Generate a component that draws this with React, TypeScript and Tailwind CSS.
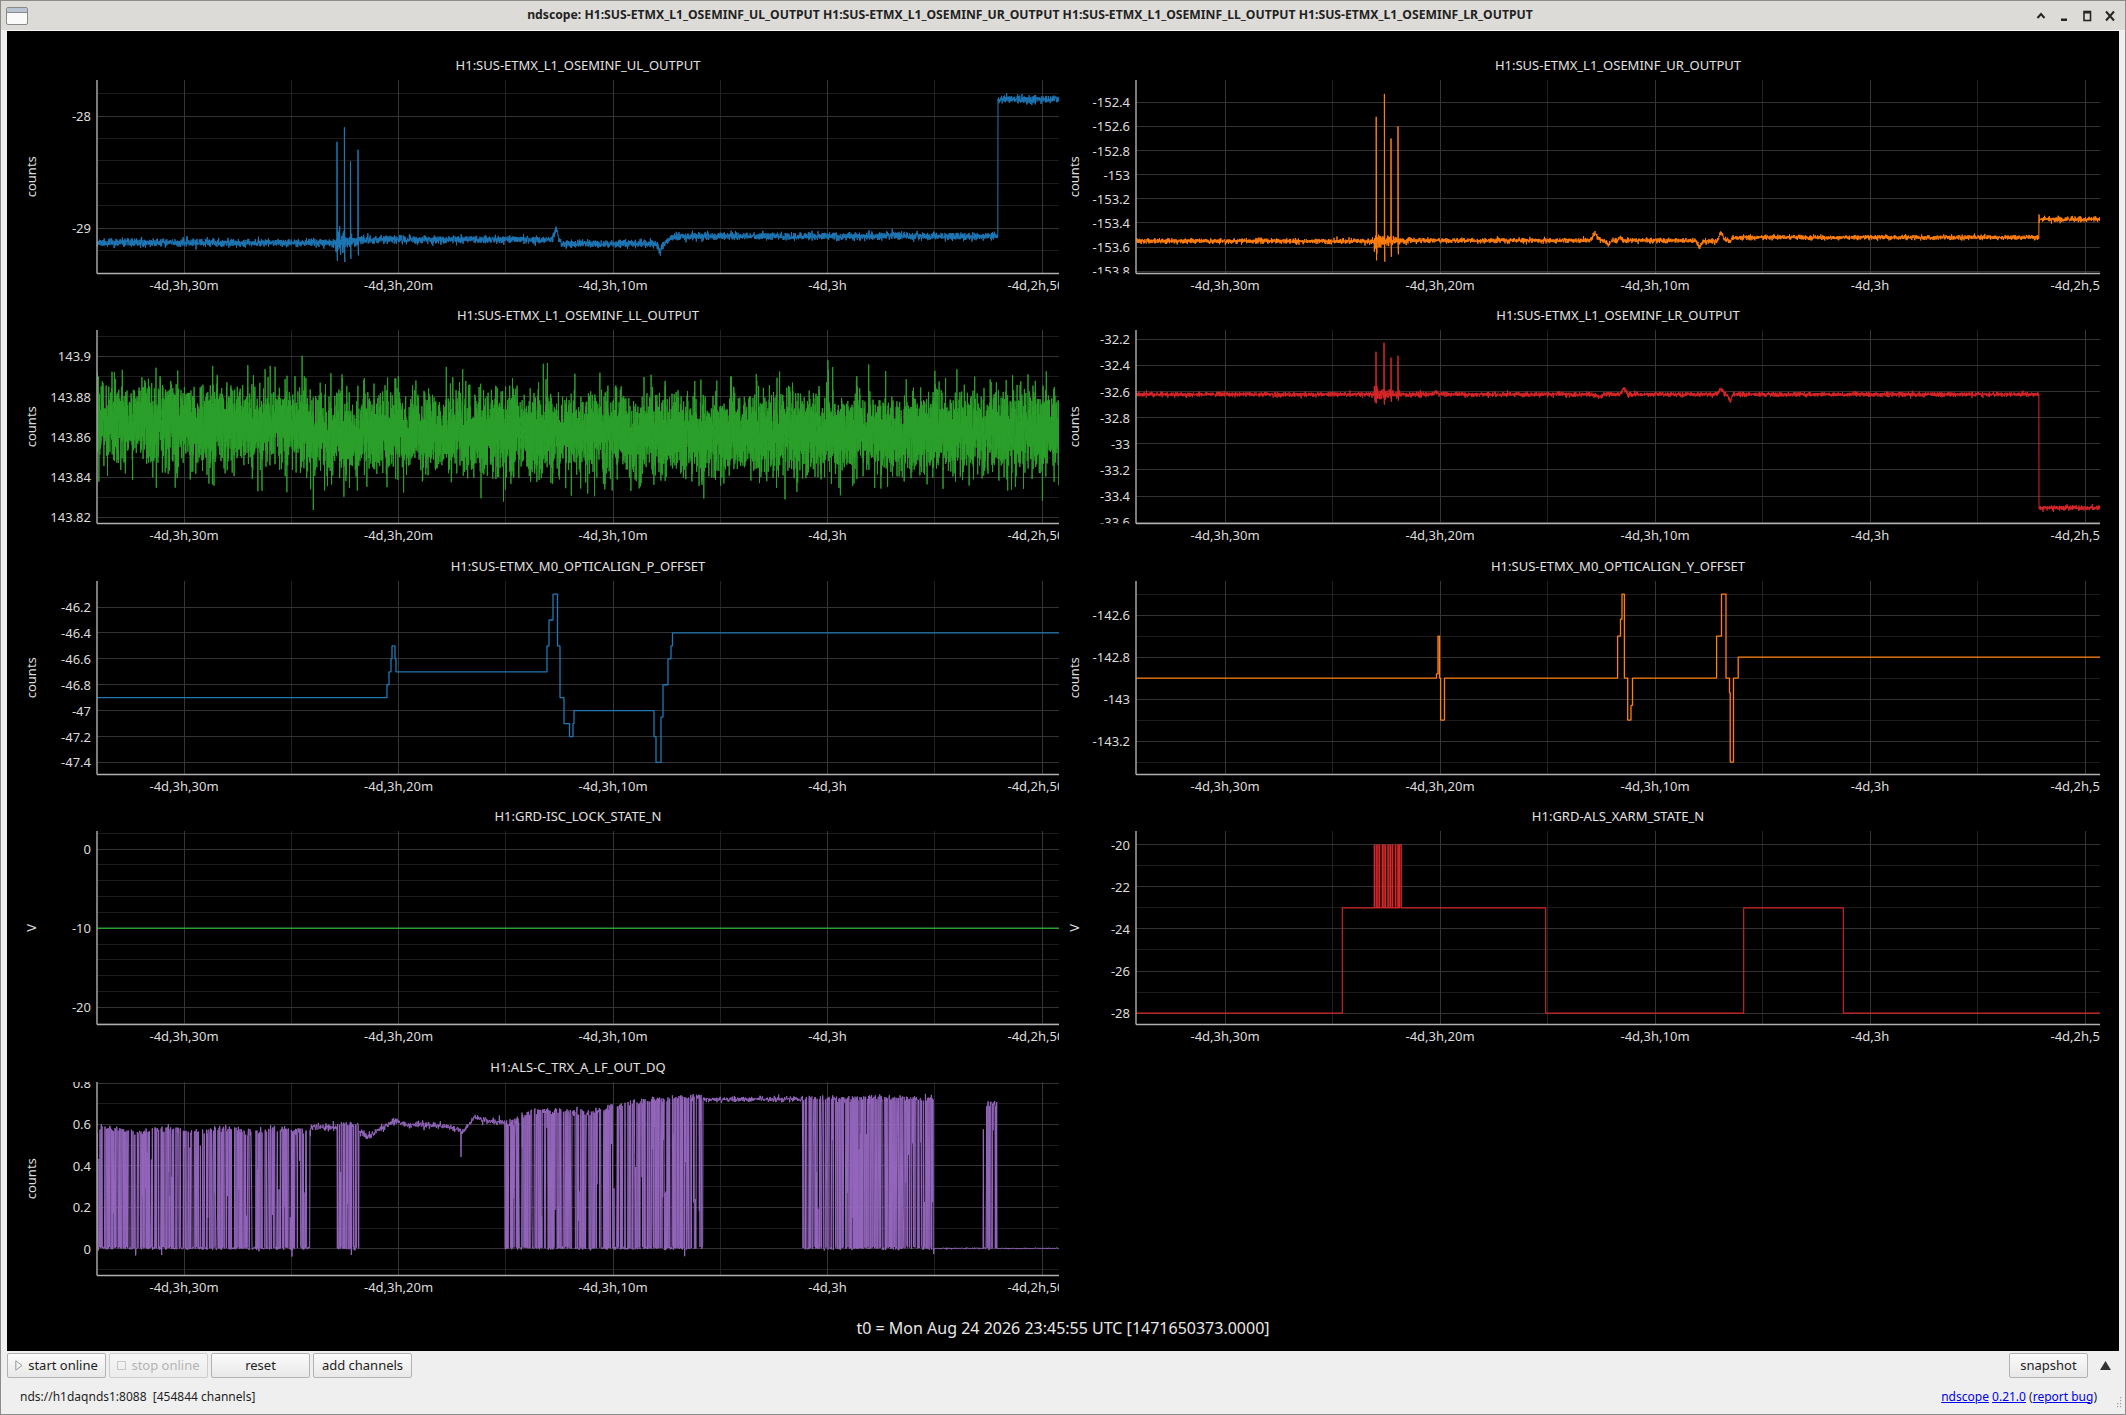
import React from "react";

type Pt = [number, number];

interface Col {
  W: number;
  gutter: number;
  unitX: number;
  t0: number;
  dt: number;
  titleCls: string;
}

interface Cfg {
  id: string;
  title: string;
  unit: string;
  color: string;
  yTop: number;
  yBot: number;
  major: [number, string][];
  minor: number[];
  data: Pt[];
  sw: number;
}

const LEFT: Col = { W: 962, gutter: 90, unitX: 24, t0: 87, dt: 107.25, titleCls: "ml-[90px] w-[962px]" };
const RIGHT: Col = { W: 964, gutter: 77, unitX: 15, t0: 89, dt: 107.5, titleCls: "ml-[77px] w-[964px]" };

const X_LABELS = ["-4d,3h,30m", "-4d,3h,20m", "-4d,3h,10m", "-4d,3h", "-4d,2h,50m"];

// small seeded generator so the traces are the same on every load
const rng = (seed: number) => {
  let a = seed >>> 0;
  return () => {
    a = (a + 0x6d2b79f5) >>> 0;
    let t = a;
    t = Math.imul(t ^ (t >>> 15), t | 1);
    t ^= t + Math.imul(t ^ (t >>> 7), t | 61);
    return ((t ^ (t >>> 14)) >>> 0) / 4294967296;
  };
};

const gauss = (r: () => number) => {
  const u = Math.max(r(), 1e-9);
  return Math.sqrt(-2 * Math.log(u)) * Math.cos(2 * Math.PI * r());
};

const g = (x: number, c: number, w: number) => Math.exp(-(((x - c) / w) ** 2));

const sstep = (a: number, b: number, x: number) => {
  const t = Math.min(1, Math.max(0, (x - a) / (b - a)));
  return t * t * (3 - 2 * t);
};

const interp = (pts: [number, number][], x: number) => {
  if (x <= pts[0][0]) return pts[0][1];
  for (let i = 1; i < pts.length; i++) {
    if (x <= pts[i][0]) {
      const [x0, y0] = pts[i - 1];
      const [x1, y1] = pts[i];
      return y0 + ((y1 - y0) * (x - x0)) / (x1 - x0);
    }
  }
  return pts[pts.length - 1][1];
};

function noiseTrace(
  seed: number,
  W: number,
  per: number,
  base: (x: number) => number,
  sigma: (x: number) => number,
  spikes: [number, number, number][],
): Pt[] {
  const r = rng(seed);
  const pts: Pt[] = [];
  let si = 0;
  const n = Math.round(W * per);
  for (let i = 0; i <= n; i++) {
    const x = i / per;
    while (si < spikes.length && spikes[si][0] <= x) {
      const [sx, up, down] = spikes[si];
      pts.push([sx, up], [sx + 0.4, down]);
      si++;
    }
    pts.push([x, base(x) + gauss(r) * sigma(x)]);
  }
  return pts;
}

function steps(list: [number, number][], W: number): Pt[] {
  const pts: Pt[] = [];
  list.forEach(([x, v], i) => {
    if (i > 0) pts.push([x, list[i - 1][1]]);
    pts.push([x, v]);
  });
  pts.push([W, list[list.length - 1][1]]);
  return pts;
}

const UL = noiseTrace(
  11,
  962,
  6,
  (x) => {
    if (x < 240) return -29.128;
    if (x < 283) return -29.115 + ((x - 240) / 43) * 0.015;
    if (x < 470) return -29.1 - 0.037 * sstep(459, 467, x) + 0.09 * g(x, 459, 2.5);
    if (x < 558) return -29.137;
    if (x < 600) return -29.137 + 0.067 * sstep(564, 580, x) - 0.075 * g(x, 563, 2.2);
    if (x < 901) return -29.07;
    return -27.85;
  },
  (x) => (x > 238 && x < 272 ? 0.05 * Math.exp(-(x - 238) / 12) + 0.017 : 0.017),
  [
    [240, -28.23, -29.29],
    [247.4, -28.1, -29.3],
    [253.5, -28.4, -29.27],
    [261, -28.3, -29.24],
  ],
);

const UR = noiseTrace(
  12,
  964,
  6,
  (x) => {
    if (x < 240) return -153.55;
    if (x < 270) return -153.545;
    if (x < 555) return -153.545 + 0.06 * g(x, 459, 3) - 0.03 * g(x, 472, 3) + 0.025 * g(x, 484, 2);
    if (x < 903)
      return -153.55 + 0.03 * sstep(586, 598, x) - 0.05 * g(x, 564, 2.5) + 0.07 * g(x, 585, 2.5) - 0.03 * g(x, 594, 1.5);
    return -153.37;
  },
  (x) => (x > 238 && x < 275 ? 0.035 * Math.exp(-(x - 238) / 12) + 0.01 : 0.01),
  [
    [240.2, -152.52, -153.71],
    [248.4, -152.33, -153.72],
    [255, -152.7, -153.68],
    [262, -152.6, -153.66],
    [903, -153.33, -153.37],
  ],
);

const LL = noiseTrace(13, 962, 10, (x) => (x < 208 ? 143.866 : 143.862), () => 0.0102, []);

const LR = noiseTrace(
  14,
  964,
  6,
  (x) => {
    if (x < 903)
      return (
        -32.622 +
        0.015 * g(x, 300, 2) -
        0.02 * g(x, 462, 4) +
        0.05 * g(x, 488, 2.5) +
        0.04 * g(x, 585, 2.5) -
        0.05 * g(x, 594, 2)
      );
    return -33.49;
  },
  (x) => (x > 238 && x < 275 ? 0.025 * Math.exp(-(x - 238) / 12) + 0.009 : 0.009),
  [
    [240, -32.295, -32.69],
    [248, -32.226, -32.7],
    [255, -32.34, -32.68],
    [262, -32.326, -32.67],
  ],
);

const P_OFF = steps(
  [
    [0, -46.9], [290, -46.8], [292, -46.7], [294, -46.6], [295, -46.5], [298, -46.6], [299, -46.7],
    [450, -46.5], [452, -46.3], [456, -46.1], [460.5, -46.5], [463, -46.9], [467, -47.1], [472.5, -47.2],
    [476, -47.1], [477, -47.0], [557, -47.2], [559, -47.4], [564, -47.05], [566, -46.8], [571, -46.6],
    [574, -46.5], [575.5, -46.4],
  ],
  962,
);

const Y_OFF = steps(
  [
    [0, -142.9], [300.5, -142.88], [302, -142.7], [303.5, -142.9], [304.6, -143.1], [308.5, -142.9],
    [481.6, -142.7], [484.5, -142.62], [486, -142.5], [488.4, -142.9], [491.7, -143.1], [495, -143.03],
    [496.5, -142.9], [580.6, -142.7], [585.5, -142.5], [590, -142.9], [593.5, -142.97], [594.2, -143.3],
    [597.5, -142.9], [602.2, -142.8],
  ],
  964,
);

const XARM = (() => {
  const r = rng(21);
  const list: [number, number][] = [[0, -28], [206.3, -23]];
  let x = 238.2;
  let hi = true;
  while (x < 264.5) {
    list.push([x, hi ? -20 : -23]);
    hi = !hi;
    x += hi ? 0.9 + r() * 1.8 : 0.4 + r() * 0.8;
  }
  list.push([265.3, -23], [409.7, -28], [607.7, -23], [707.3, -28]);
  return steps(list, 964);
})();

const ISC = steps([[0, -10]], 962);

const ALS = (() => {
  const r = rng(5);
  const pts: Pt[] = [];
  const per = 3;
  let high = true;
  const envE: [number, number][] = [[408, 0.6], [440, 0.67], [490, 0.655], [530, 0.7], [560, 0.72], [606, 0.735]];
  const smoothD: [number, number][] = [
    [262, 0.56], [270, 0.545], [285, 0.58], [296, 0.615], [310, 0.6], [330, 0.598], [350, 0.59],
    [360, 0.575], [366, 0.562], [372, 0.6], [378, 0.64], [385, 0.62], [395, 0.615], [408, 0.612],
  ];
  const tog = (x: number): number | null => {
    if (x < 213.5) return 0.572 + 0.01 * Math.sin(x / 9);
    if (x >= 240 && x < 262) return 0.6;
    if (x >= 408 && x < 606) return interp(envE, x);
    if (x >= 705 && x < 837) return 0.725;
    if (x >= 886 && x < 900) return 0.7;
    return null;
  };
  for (let i = 1; i <= 962 * per; i++) {
    const x = i / per;
    const env = tog(x);
    let v: number;
    if (env !== null) {
      if (r() < 0.42) high = !high;
      if (high) v = r() < 0.14 ? env * (0.2 + r() * 0.7) : env + gauss(r) * 0.009;
      else v = 0.003 + gauss(r) * 0.004 - (r() < 0.012 ? 0.035 : 0);
    } else if (x < 240) v = 0.585 + gauss(r) * 0.008;
    else if (x < 408) v = interp(smoothD, x) + gauss(r) * 0.008 - (Math.abs(x - 364) < 0.3 ? 0.12 : 0);
    else if (x < 705) v = 0.722 + gauss(r) * 0.007;
    else v = 0.002 + gauss(r) * 0.0015;
    pts.push([x, v]);
  }
  return pts;
})();

const PLOTS: [Cfg, Col][] = [
  [
    {
      id: "ul", title: "H1:SUS-ETMX_L1_OSEMINF_UL_OUTPUT", unit: "counts", color: "#1f77b4",
      yTop: -27.679, yBot: -29.402, major: [[-28, "-28"], [-29, "-29"]],
      minor: [-27.8, -28.2, -28.4, -28.6, -28.8, -29.2, -29.4], data: UL, sw: 1,
    },
    LEFT,
  ],
  [
    {
      id: "ur", title: "H1:SUS-ETMX_L1_OSEMINF_UR_OUTPUT", unit: "counts", color: "#ff7f0e",
      yTop: -152.215, yBot: -153.819,
      major: [[-152.4, "-152.4"], [-152.6, "-152.6"], [-152.8, "-152.8"], [-153, "-153"], [-153.2, "-153.2"], [-153.4, "-153.4"], [-153.6, "-153.6"], [-153.8, "-153.8"]],
      minor: [], data: UR, sw: 1,
    },
    RIGHT,
  ],
  [
    {
      id: "ll", title: "H1:SUS-ETMX_L1_OSEMINF_LL_OUTPUT", unit: "counts", color: "#2ca02c",
      yTop: 143.9131, yBot: 143.817,
      major: [[143.9, "143.9"], [143.88, "143.88"], [143.86, "143.86"], [143.84, "143.84"], [143.82, "143.82"]],
      minor: [143.91, 143.89, 143.87, 143.85, 143.83], data: LL, sw: 1,
    },
    LEFT,
  ],
  [
    {
      id: "lr", title: "H1:SUS-ETMX_L1_OSEMINF_LR_OUTPUT", unit: "counts", color: "#d62728",
      yTop: -32.129, yBot: -33.61,
      major: [[-32.2, "-32.2"], [-32.4, "-32.4"], [-32.6, "-32.6"], [-32.8, "-32.8"], [-33, "-33"], [-33.2, "-33.2"], [-33.4, "-33.4"], [-33.6, "-33.6"]],
      minor: [], data: LR, sw: 1,
    },
    RIGHT,
  ],
  [
    {
      id: "po", title: "H1:SUS-ETMX_M0_OPTICALIGN_P_OFFSET", unit: "counts", color: "#1f77b4",
      yTop: -45.999, yBot: -47.493,
      major: [[-46.2, "-46.2"], [-46.4, "-46.4"], [-46.6, "-46.6"], [-46.8, "-46.8"], [-47, "-47"], [-47.2, "-47.2"], [-47.4, "-47.4"]],
      minor: [], data: P_OFF, sw: 1.3,
    },
    LEFT,
  ],
  [
    {
      id: "yo", title: "H1:SUS-ETMX_M0_OPTICALIGN_Y_OFFSET", unit: "counts", color: "#ff7f0e",
      yTop: -142.438, yBot: -143.359,
      major: [[-142.6, "-142.6"], [-142.8, "-142.8"], [-143, "-143"], [-143.2, "-143.2"]],
      minor: [-142.5, -142.7, -142.9, -143.1, -143.3], data: Y_OFF, sw: 1.3,
    },
    RIGHT,
  ],
  [
    {
      id: "isc", title: "H1:GRD-ISC_LOCK_STATE_N", unit: "V", color: "#2ca02c",
      yTop: 2.28, yBot: -22.15, major: [[0, "0"], [-10, "-10"], [-20, "-20"]],
      minor: [2, -2, -4, -6, -8, -12, -14, -16, -18, -22], data: ISC, sw: 1.3,
    },
    LEFT,
  ],
  [
    {
      id: "xarm", title: "H1:GRD-ALS_XARM_STATE_N", unit: "V", color: "#d62728",
      yTop: -19.35, yBot: -28.54,
      major: [[-20, "-20"], [-22, "-22"], [-24, "-24"], [-26, "-26"], [-28, "-28"]],
      minor: [-21, -23, -25, -27], data: XARM, sw: 1.1,
    },
    RIGHT,
  ],
  [
    {
      id: "als", title: "H1:ALS-C_TRX_A_LF_OUT_DQ", unit: "counts", color: "#9467bd",
      yTop: 0.805, yBot: -0.129,
      major: [[0.8, "0.8"], [0.6, "0.6"], [0.4, "0.4"], [0.2, "0.2"], [0, "0"]],
      minor: [0.7, 0.5, 0.3, 0.1, -0.1], data: ALS, sw: 1,
    },
    LEFT,
  ],
];

const H = 193.5;

function Plot({ cfg, col }: { cfg: Cfg; col: Col }) {
  const { W, gutter } = col;
  const sy = (v: number) => ((cfg.yTop - v) / (cfg.yTop - cfg.yBot)) * H;
  const xt = Array.from({ length: 9 }, (_, k) => col.t0 + k * col.dt);
  const d = cfg.data
    .map((p, i) => `${i ? "L" : "M"}${p[0].toFixed(2)} ${sy(p[1]).toFixed(2)}`)
    .join("");

  return (
    <div className="flex flex-col">
      <div className={`h-[28px] flex items-center justify-center text-[13px] text-[#e2e2e2] ${col.titleCls}`}>
        {cfg.title}
      </div>
      <svg width={gutter + W} height={222.5} className="block">
        <defs>
          <clipPath id={`${cfg.id}-p`}>
            <rect x={0} y={0} width={W} height={H} />
          </clipPath>
          <clipPath id={`${cfg.id}-y`}>
            <rect x={-gutter} y={0} width={gutter} height={H} />
          </clipPath>
        </defs>
        <text
          transform={`translate(${col.unitX} ${H / 2}) rotate(-90)`}
          textAnchor="middle"
          dominantBaseline="central"
          fill="#dcdcdc"
          fontSize={13}
        >
          {cfg.unit}
        </text>
        <g transform={`translate(${gutter} 0)`}>
          {cfg.minor.map((v) => (
            <line key={`m${v}`} x1={0} x2={W} y1={sy(v)} y2={sy(v)} stroke="#1c1c1c" shapeRendering="crispEdges" />
          ))}
          {xt.map((x, k) => (
            <line
              key={`v${k}`}
              x1={x}
              x2={x}
              y1={0}
              y2={H}
              stroke={k % 2 === 0 ? "#363636" : "#222222"}
              shapeRendering="crispEdges"
            />
          ))}
          {cfg.major.map(([v]) => (
            <line key={`M${v}`} x1={0} x2={W} y1={sy(v)} y2={sy(v)} stroke="#333333" shapeRendering="crispEdges" />
          ))}
          <path
            d={d}
            clipPath={`url(#${cfg.id}-p)`}
            fill="none"
            stroke={cfg.color}
            strokeWidth={cfg.sw}
            strokeLinejoin="bevel"
          />
          <line x1={0} x2={0} y1={0} y2={H} stroke="#a4a4a4" strokeWidth={1.5} />
          <line x1={0} x2={W} y1={H} y2={H} stroke="#b0b0b0" strokeWidth={1.5} />
          <g clipPath={`url(#${cfg.id}-y)`}>
            {cfg.major.map(([v, s]) => (
              <text key={`t${s}`} x={-6} y={sy(v)} textAnchor="end" dominantBaseline="central" fill="#dcdcdc" fontSize={13}>
                {s}
              </text>
            ))}
          </g>
          {X_LABELS.map((s, i) => (
            <text key={s} x={xt[i * 2]} y={H + 11.5} textAnchor="middle" dominantBaseline="central" fill="#dcdcdc" fontSize={13}>
              {s}
            </text>
          ))}
        </g>
      </svg>
    </div>
  );
}

function WinIcon() {
  return (
    <svg width="22" height="18" viewBox="0 0 22 18">
      <rect x="0.5" y="0.5" width="21" height="17" rx="1.5" fill="#fafafa" stroke="#8a8a8a" />
      <rect x="1" y="1" width="20" height="4" fill="#b9c3d2" />
      <line x1="1" y1="5.5" x2="21" y2="5.5" stroke="#8a8a8a" />
    </svg>
  );
}

function TitleButtons() {
  return (
    <div className="flex items-center pr-[4px]">
      <div className="w-[23px] h-[30px] flex items-center justify-center">
        <svg width="12" height="12" viewBox="0 0 12 12">
          <polyline points="2.5,8 6,4 9.5,8" fill="none" stroke="#262626" strokeWidth="2" />
        </svg>
      </div>
      <div className="w-[23px] h-[30px] flex items-center justify-center">
        <svg width="12" height="12" viewBox="0 0 12 12">
          <rect x="3" y="8.5" width="6" height="2.5" fill="#262626" />
        </svg>
      </div>
      <div className="w-[23px] h-[30px] flex items-center justify-center">
        <svg width="12" height="12" viewBox="0 0 12 12">
          <rect x="3" y="1.5" width="6.5" height="9" fill="none" stroke="#262626" strokeWidth="1.6" />
          <rect x="3" y="1.5" width="6.5" height="2" fill="#262626" />
        </svg>
      </div>
      <div className="w-[23px] h-[30px] flex items-center justify-center">
        <svg width="12" height="12" viewBox="0 0 12 12">
          <path d="M2 1.5 L10 10.5 M10 1.5 L2 10.5" stroke="#262626" strokeWidth="2" />
        </svg>
      </div>
    </div>
  );
}

function Btn({ children, disabled }: { children: React.ReactNode; disabled?: boolean }) {
  return (
    <div
      className={
        disabled
          ? "w-[99px] h-[25px] flex items-center justify-center gap-[5px] rounded-[2px] border border-[#cdcdcd] bg-gradient-to-b from-[#f6f6f6] to-[#ececec] text-[#b4b4b4]"
          : "w-[99px] h-[25px] flex items-center justify-center gap-[5px] rounded-[2px] border border-[#b2b2b2] bg-gradient-to-b from-[#fbfbfb] to-[#e8e8e8] text-[#1e1e1e]"
      }
    >
      {children}
    </div>
  );
}

export default function App() {
  return (
    <div className="relative w-[2126px] h-[1415px] overflow-hidden bg-[#efefef] border border-[#8c8c8c] flex flex-col font-['Noto_Sans',sans-serif] text-[13px] text-[#1e1e1e]">
      <div className="h-[30px] shrink-0 flex items-center bg-[#dddbd7] border-b border-[#f4f4f4]">
        <div className="w-[30px] flex items-center justify-center pl-[2px]">
          <WinIcon />
        </div>
        <div className="flex-1 text-center font-bold text-[12.2px] text-[#222]">
          ndscope: H1:SUS-ETMX_L1_OSEMINF_UL_OUTPUT H1:SUS-ETMX_L1_OSEMINF_UR_OUTPUT H1:SUS-ETMX_L1_OSEMINF_LL_OUTPUT
          H1:SUS-ETMX_L1_OSEMINF_LR_OUTPUT
        </div>
        <TitleButtons />
      </div>

      <div className="px-[6px] flex flex-col">
        <div className="h-[1320px] bg-black flex flex-col">
          <div className="pt-[20.5px] grid grid-cols-[1052px_1041px] grid-rows-[repeat(5,250.5px)]">
            {PLOTS.map(([cfg, col]) => (
              <Plot key={cfg.id} cfg={cfg} col={col} />
            ))}
          </div>
          <div className="h-[47px] flex items-center justify-center text-[16px] text-[#e8e8e8]">
            t0 = Mon Aug 24 2026 23:45:55 UTC [1471650373.0000]
          </div>
        </div>

        <div className="mt-[2px] h-[25px] flex items-center">
          <div className="flex gap-[3px]">
            <Btn>
              <svg width="8" height="11" viewBox="0 0 8 11">
                <polygon points="0.8,0.8 7,5.5 0.8,10.2" fill="none" stroke="#9a9a9a" strokeWidth="1" />
              </svg>
              <span>start online</span>
            </Btn>
            <Btn disabled>
              <svg width="9" height="9" viewBox="0 0 9 9">
                <rect x="0.5" y="0.5" width="8" height="8" fill="none" stroke="#c8c8c8" />
              </svg>
              <span>stop online</span>
            </Btn>
            <Btn>reset</Btn>
            <Btn>add channels</Btn>
          </div>
          <div className="flex-1" />
          <div className="w-[79px] h-[25px] flex items-center justify-center rounded-[2px] border border-[#b2b2b2] bg-gradient-to-b from-[#fbfbfb] to-[#e8e8e8]">
            snapshot
          </div>
          <div className="w-[31px] h-[25px] flex items-center justify-center pl-[3px]">
            <svg width="11" height="9" viewBox="0 0 11 9">
              <polygon points="5.5,0 11,9 0,9" fill="#333" />
            </svg>
          </div>
        </div>

        <div className="h-[35px] pt-[2px] flex items-center pl-[13px] pr-[22px] text-[12px]">
          <span className="whitespace-pre">nds://h1daqnds1:8088  [454844 channels]</span>
          <div className="flex-1" />
          <span>
            <span className="text-[#0000ee] underline">ndscope</span>{" "}
            <span className="text-[#0000ee] underline">0.21.0</span> (
            <span className="text-[#0000ee] underline">report bug</span>)
          </span>
        </div>
      </div>

      <div className="absolute right-[3px] bottom-[5px]">
        <svg width="6" height="12" viewBox="0 0 6 12">
          {[0, 1, 2, 3].map((i) => (
            <React.Fragment key={i}>
              <rect x={4} y={i * 3} width={1.2} height={1.2} fill="#a0a0a0" />
              {i > 1 && <rect x={1} y={i * 3} width={1.2} height={1.2} fill="#a0a0a0" />}
            </React.Fragment>
          ))}
        </svg>
      </div>
    </div>
  );
}
